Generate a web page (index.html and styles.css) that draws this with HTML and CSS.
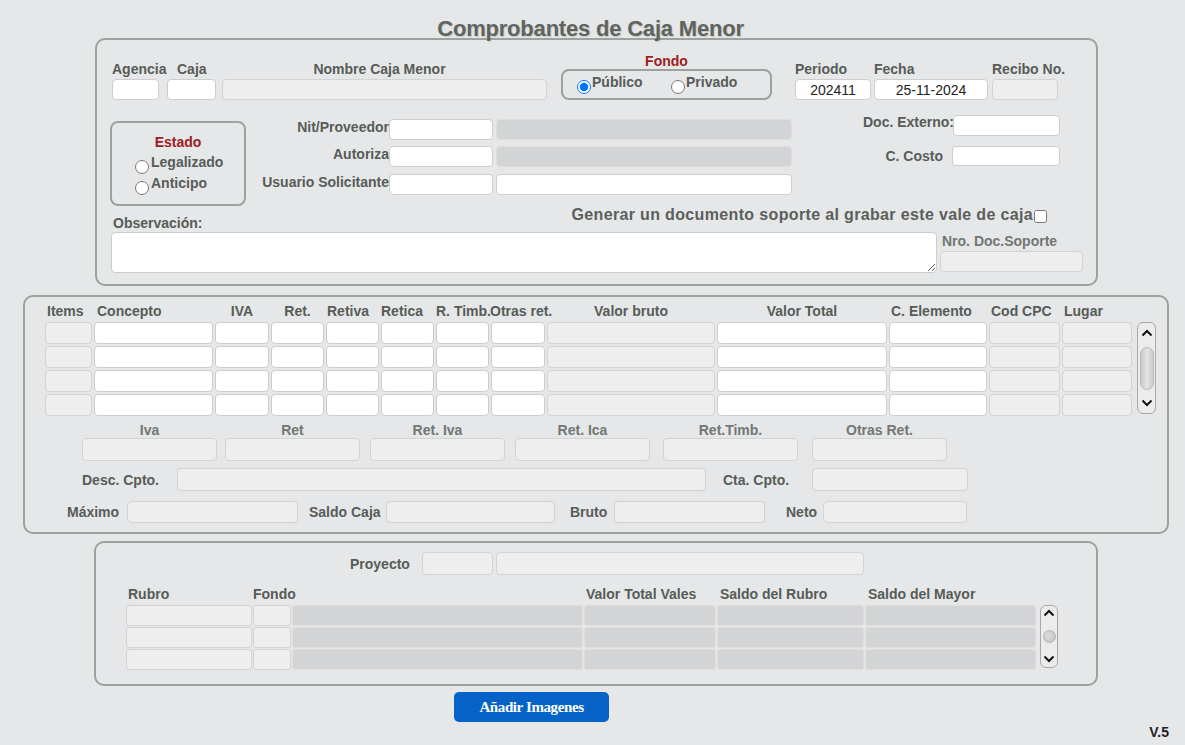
FILE: index.html
```html
<!DOCTYPE html>
<html lang="es">
<head>
    <meta charset="UTF-8">
    <meta name="viewport" content="width=device-width, initial-scale=1.0">
    <title>Comprobantes de Caja Menor</title>
    <link rel="stylesheet" href="styles.css">
</head>
<body>

<h1 class="title">Comprobantes de Caja Menor</h1>

<section class="panel panel-head">
    <div class="row-a">
        <div class="fcol c-agencia"><span class="lbl">Agencia</span><input class="in" type="text"></div>
        <div class="fcol c-caja"><span class="lbl">Caja</span><input class="in" type="text"></div>
        <div class="fcol c-nombre"><span class="lbl">Nombre Caja Menor</span><input class="in ro" type="text" readonly></div>
        <div class="fcol c-fondo">
            <span class="lbl red">Fondo</span>
            <div class="fondo-box">
                <label class="opt opt-pub"><input type="radio" name="fondo" checked><span>Público</span></label>
                <label class="opt"><input type="radio" name="fondo"><span>Privado</span></label>
            </div>
        </div>
        <div class="fcol c-periodo"><span class="lbl">Periodo</span><input class="in num" type="text" value="202411"></div>
        <div class="fcol c-fecha"><span class="lbl">Fecha</span><input class="in num" type="text" value="25-11-2024"></div>
        <div class="fcol c-recibo"><span class="lbl">Recibo No.</span><input class="in ro" type="text" readonly></div>
    </div>

    <div class="row-b">
        <div class="estado">
            <div class="lbl red estado-title">Estado</div>
            <label class="opt"><input type="radio" name="estado"><span>Legalizado</span></label>
            <label class="opt"><input type="radio" name="estado"><span>Anticipo</span></label>
        </div>
        <div class="party">
            <span class="lbl">Nit/Proveedor</span><input class="in" type="text"><input class="in dk in2" type="text" readonly>
            <span class="lbl">Autoriza</span><input class="in" type="text"><input class="in dk in2" type="text" readonly>
            <span class="lbl">Usuario Solicitante</span><input class="in" type="text"><input class="in in2" type="text">
        </div>
        <div class="ext">
            <div class="ext-row"><span class="lbl lbl-doc">Doc. Externo:</span><input class="in w-doc" type="text"></div>
            <div class="ext-row ext-costo"><span class="lbl lbl-costo">C. Costo</span><input class="in w-costo" type="text"></div>
        </div>
    </div>

    <div class="row-c">
        <div class="row-c-top">
            <span class="lbl obs-lbl">Observación:</span>
            <label class="gen"><span>Generar un documento soporte al grabar este vale de caja</span><input type="checkbox"></label>
        </div>
        <div class="row-c-bot">
            <textarea class="obs"></textarea>
            <div class="nro">
                <div class="lbl soft">Nro. Doc.Soporte</div>
                <input class="in ro" type="text" readonly>
            </div>
        </div>
    </div>
</section>

<section class="panel panel-lines">
    <div class="lines-grid">
        <span class="th l">Items</span>
        <span class="th l3">Concepto</span>
        <span class="th">IVA</span>
        <span class="th">Ret.</span>
        <span class="th l1">Retiva</span>
        <span class="th l0">Retica</span>
        <span class="th l0">R. Timb.</span>
        <span class="th lm">Otras ret.</span>
        <span class="th">Valor bruto</span>
        <span class="th">Valor Total</span>
        <span class="th l">C. Elemento</span>
        <span class="th l">Cod CPC</span>
        <span class="th l">Lugar</span>
        <span class="th"></span>

        <div class="vscroll">
            <svg class="arr" width="12" height="8" viewBox="0 0 12 8"><polyline points="1.5,6.5 6,2 10.5,6.5" fill="none" stroke="#111" stroke-width="2"/></svg>
            <div class="thumb"></div>
            <svg class="arr" width="12" height="8" viewBox="0 0 12 8"><polyline points="1.5,1.5 6,6 10.5,1.5" fill="none" stroke="#111" stroke-width="2"/></svg>
        </div>

        <input class="in ro"><input class="in"><input class="in"><input class="in"><input class="in"><input class="in"><input class="in"><input class="in"><input class="in ro"><input class="in"><input class="in"><input class="in ro"><input class="in ro">
        <input class="in ro"><input class="in"><input class="in"><input class="in"><input class="in"><input class="in"><input class="in"><input class="in"><input class="in ro"><input class="in"><input class="in"><input class="in ro"><input class="in ro">
        <input class="in ro"><input class="in"><input class="in"><input class="in"><input class="in"><input class="in"><input class="in"><input class="in"><input class="in ro"><input class="in"><input class="in"><input class="in ro"><input class="in ro">
        <input class="in ro"><input class="in"><input class="in"><input class="in"><input class="in"><input class="in"><input class="in"><input class="in"><input class="in ro"><input class="in"><input class="in"><input class="in ro"><input class="in ro">
    </div>

    <div class="tot-row">
        <div class="tot"><span class="lbl soft">Iva</span><input class="in ro"></div>
        <div class="tot t2"><span class="lbl soft">Ret</span><input class="in ro"></div>
        <div class="tot t3"><span class="lbl soft">Ret. Iva</span><input class="in ro"></div>
        <div class="tot t4"><span class="lbl soft">Ret. Ica</span><input class="in ro"></div>
        <div class="tot t5"><span class="lbl soft">Ret.Timb.</span><input class="in ro"></div>
        <div class="tot t6"><span class="lbl soft">Otras Ret.</span><input class="in ro"></div>
    </div>

    <div class="desc-row">
        <span class="lbl l-desc">Desc. Cpto.</span><input class="in ro w-desc">
        <span class="lbl l-cta">Cta. Cpto.</span><input class="in ro w-cta">
    </div>

    <div class="sum-row">
        <span class="lbl l-max">Máximo</span><input class="in ro w-max">
        <span class="lbl l-saldo">Saldo Caja</span><input class="in ro w-saldo">
        <span class="lbl l-bruto">Bruto</span><input class="in ro w-bruto">
        <span class="lbl l-neto">Neto</span><input class="in ro w-neto">
    </div>
</section>

<section class="panel panel-budget">
    <div class="proj-row">
        <span class="lbl l-proy">Proyecto</span><input class="in ro w-proy1"><input class="in ro w-proy2">
    </div>
    <div class="budget-grid">
        <span class="th l">Rubro</span>
        <span class="th l0">Fondo</span>
        <span class="th"></span>
        <span class="th l">Valor Total Vales</span>
        <span class="th l3">Saldo del Rubro</span>
        <span class="th l3">Saldo del Mayor</span>
        <span class="th"></span>

        <div class="vscroll vs-small">
            <svg class="arr" width="12" height="8" viewBox="0 0 12 8"><polyline points="1.5,6.5 6,2 10.5,6.5" fill="none" stroke="#111" stroke-width="2"/></svg>
            <div class="dot"></div>
            <svg class="arr" width="12" height="8" viewBox="0 0 12 8"><polyline points="1.5,1.5 6,6 10.5,1.5" fill="none" stroke="#111" stroke-width="2"/></svg>
        </div>

        <input class="in ro"><input class="in ro"><input class="in dk"><input class="in dk"><input class="in dk"><input class="in dk">
        <input class="in ro"><input class="in ro"><input class="in dk"><input class="in dk"><input class="in dk"><input class="in dk">
        <input class="in ro"><input class="in ro"><input class="in dk"><input class="in dk"><input class="in dk"><input class="in dk">
    </div>
</section>

<div class="foot">
    <button class="btn-img" type="button">Añadir Imagenes</button>
    <span class="ver">V.5</span>
</div>

</body>
</html>
```

FILE: styles.css
```css
body {
    margin: 0;
    width: 1185px;
    height: 745px;
    overflow: hidden;
    background: #e6e7e9;
    font-family: "Liberation Sans", Arial, sans-serif;
    font-size: 14px;
    font-weight: bold;
    color: #565c56;
}
.title {
    position: relative;
    z-index: 1;
    margin: 0 0 -3px 0;
    padding: 17px 4px 0 0;
    height: 24px;
    line-height: 24px;
    font-size: 22px;
    letter-spacing: -0.2px;
    text-align: center;
    color: #5e655e;
    text-shadow: 1px 1px 1px rgba(0, 0, 0, 0.15);
}
.panel {
    box-sizing: border-box;
    border: 2px solid #9da29d;
    border-radius: 10px;
}
.lbl {
    line-height: 16px;
    white-space: nowrap;
}
.red {
    color: #9e1c1c;
}
.soft {
    color: #727772;
}
.in {
    box-sizing: border-box;
    display: block;
    height: 21px;
    margin: 0;
    padding: 0 4px;
    border: 1px solid #cdcdcd;
    border-radius: 4px;
    background: #fff;
    font-family: "Liberation Sans", Arial, sans-serif;
    font-size: 14px;
    font-weight: normal;
    color: #222;
    outline: none;
}
.in.ro {
    background: #eeeeee;
    border-color: #d3d3d3;
}
.in.dk {
    background: #d3d4d6;
    border-color: #dedede;
}
.in.num {
    text-align: center;
}

/* cabecera */
.panel-head {
    margin-left: 95px;
    width: 1003px;
    height: 248px;
    padding-top: 13px;
}
.row-a {
    display: flex;
    align-items: flex-end;
    padding-left: 15px;
}
.fcol {
    display: flex;
    flex-direction: column;
}
.fcol .in {
    margin-top: 2px;
}
.c-agencia { width: 55px; }
.c-agencia .in { width: 47px; }
.c-caja { width: 55px; }
.c-caja .lbl { padding-left: 10px; }
.c-caja .in { width: 49px; }
.c-nombre { width: 325px; text-align: center; }
.c-nombre .lbl { padding-right: 10px; }
.c-nombre .in { width: 325px; }
.c-fondo { width: 211px; margin-left: 14px; text-align: center; }
.c-periodo { width: 79px; margin-left: 23px; }
.c-periodo .in { width: 76px; }
.c-fecha { width: 118px; }
.c-fecha .in { width: 114px; }
.c-recibo .in { width: 66px; }

.fondo-box {
    box-sizing: border-box;
    display: flex;
    height: 31px;
    padding: 3px 0 0 14px;
    border: 2px solid #9da29d;
    border-radius: 8px;
    text-align: left;
}
.opt {
    display: flex;
    align-items: flex-start;
    line-height: 16px;
}
.opt input {
    width: 14px;
    height: 14px;
    margin: 6px 1px 0 0;
}
.opt-pub { width: 94px; }

.row-b {
    display: flex;
    align-items: flex-start;
    margin-top: 15px;
    padding-left: 13px;
}
.estado {
    box-sizing: border-box;
    width: 136px;
    height: 85px;
    margin-top: 6px;
    padding-top: 11px;
    border: 2px solid #9da29d;
    border-radius: 8px;
}
.estado-title {
    text-align: center;
    margin-bottom: 4px;
}
.estado .opt {
    margin-left: 23px;
    height: 20px;
    margin-bottom: 1px;
}
.estado .opt input { margin-right: 2px; }
.party {
    display: grid;
    grid-template-columns: 143px 104px 299px;
    grid-template-rows: 27px 28px 21px;
    align-items: start;
    margin-top: 4px;
}
.party .lbl { text-align: right; }
.party .in { width: 104px; }
.party .in2 { width: 296px; margin-left: 3px; }
.ext {
    width: 268px;
}
.ext-row {
    display: flex;
    justify-content: flex-end;
    align-items: flex-start;
}
.lbl-doc { margin: -1px -1px 0 0; }
.w-doc { width: 107px; }
.ext-costo { margin-top: 10px; }
.lbl-costo { margin: 2px 9px 0 0; }
.w-costo { width: 108px; height: 20px; }

.row-c {
    margin-top: 1px;
    padding-left: 14px;
}
.row-c-top {
    display: flex;
    justify-content: space-between;
    align-items: flex-start;
    padding-right: 49px;
}
.obs-lbl {
    margin: 8px 0 0 2px;
}
.gen {
    display: flex;
    align-items: center;
    line-height: 16px;
    font-size: 16px;
    letter-spacing: 0.35px;
    color: #5a5f5a;
}
.gen input {
    width: 13px;
    height: 13px;
    margin: 2px 0 0 1px;
}
.row-c-bot {
    display: flex;
    margin-top: 1px;
}
.obs {
    box-sizing: border-box;
    display: block;
    width: 826px;
    height: 41px;
    margin: 0;
    border: 1px solid #cdcdcd;
    border-radius: 4px;
    background: #fff;
    resize: both;
}
.nro {
    width: 143px;
    margin-left: 3px;
}
.nro .lbl { margin-top: 1px; padding-left: 2px; }
.nro .in { margin-top: 2px; width: 143px; }

/* detalle */
.panel-lines {
    margin: 9px 0 0 23px;
    width: 1146px;
    height: 239px;
    padding-top: 6px;
}
.lines-grid {
    display: grid;
    grid-template-columns: 47px 119px 54px 53px 53px 53px 53px 54px 168px 170px 98px 71px 70px 22px;
    grid-template-rows: 17px repeat(4, 22px);
    column-gap: 2px;
    row-gap: 2px;
    margin-left: 20px;
}
.lines-grid .in { height: 22px; width: 100%; }
.th {
    line-height: 16px;
    white-space: nowrap;
    text-align: center;
}
.th.l { text-align: left; padding-left: 2px; }
.th.l3 { text-align: left; padding-left: 3px; }
.th.l1 { text-align: left; padding-left: 1px; }
.th.l0 { text-align: left; }
.th.lm { text-align: left; margin-left: -1px; }

.vscroll {
    box-sizing: border-box;
    grid-column: 14;
    grid-row: 2 / 6;
    width: 19px;
    height: 92px;
    margin-left: 3px;
    padding: 6px 0 6px;
    display: flex;
    flex-direction: column;
    align-items: center;
    justify-content: space-between;
    border: 1px solid #a9a9a9;
    border-radius: 6px;
    background: #ececec;
}
.arr { display: block; }
.thumb {
    box-sizing: border-box;
    width: 14px;
    height: 43px;
    border: 1px solid #bcbcbc;
    border-radius: 7px;
    background: linear-gradient(to right, #cacaca, #e4e4e4 50%, #cacaca);
}
.tot-row {
    display: flex;
    margin: 6px 0 0 57px;
}
.tot {
    width: 135px;
    display: flex;
    flex-direction: column;
    text-align: center;
}
.tot .in { height: 23px; width: 135px; }
.t2 { margin-left: 8px; }
.t3 { margin-left: 10px; }
.t4 { margin-left: 10px; }
.t5 { margin-left: 13px; }
.t6 { margin-left: 14px; }

.desc-row {
    display: flex;
    align-items: center;
    margin: 7px 0 0 57px;
}
.desc-row .in { height: 23px; }
.l-desc { width: 95px; }
.w-desc { width: 529px; }
.l-cta { width: 89px; margin-left: 17px; }
.w-cta { width: 156px; }

.sum-row {
    display: flex;
    align-items: center;
    margin: 10px 0 0 42px;
}
.sum-row .in { height: 22px; }
.l-max { width: 60px; }
.w-max { width: 171px; }
.l-saldo { width: 77px; margin-left: 11px; }
.w-saldo { width: 169px; }
.l-bruto { width: 44px; margin-left: 15px; }
.w-bruto { width: 151px; }
.l-neto { width: 37px; margin-left: 21px; }
.w-neto { width: 144px; }

/* presupuesto */
.panel-budget {
    margin: 7px 0 0 94px;
    width: 1004px;
    height: 145px;
    padding-top: 9px;
}
.proj-row {
    display: flex;
    align-items: center;
    margin-left: 254px;
}
.proj-row .in { height: 23px; }
.l-proy { width: 72px; }
.w-proy1 { width: 71px; }
.w-proy2 { width: 368px; margin-left: 3px; }
.budget-grid {
    display: grid;
    grid-template-columns: 126px 38px 291px 132px 147px 171px 22px;
    grid-template-rows: 18px repeat(3, 21px);
    column-gap: 1px;
    row-gap: 1px;
    margin: 11px 0 0 30px;
}
.budget-grid .in { height: 21px; width: 100%; border-radius: 3px; }
.vs-small {
    grid-column: 7;
    grid-row: 2 / 5;
    width: 18px;
    height: 63px;
    padding: 3px 0 4px;
}
.dot {
    width: 13px;
    height: 13px;
    border-radius: 50%;
    background: radial-gradient(circle at 40% 40%, #dedede, #bdbdbd);
    border: 1px solid #b5b5b5;
    box-sizing: border-box;
}

.foot {
    display: flex;
    align-items: flex-start;
    margin-top: 6px;
}
.btn-img {
    width: 155px;
    height: 30px;
    margin-left: 454px;
    border: none;
    border-radius: 5px;
    background: #0563c8;
    color: #fff;
    font-family: "Liberation Serif", "Times New Roman", serif;
    font-size: 15px;
    font-weight: bold;
    letter-spacing: -0.4px;
}
.ver {
    margin: 32px 16px 0 auto;
    line-height: 16px;
    color: #222;
}
```
